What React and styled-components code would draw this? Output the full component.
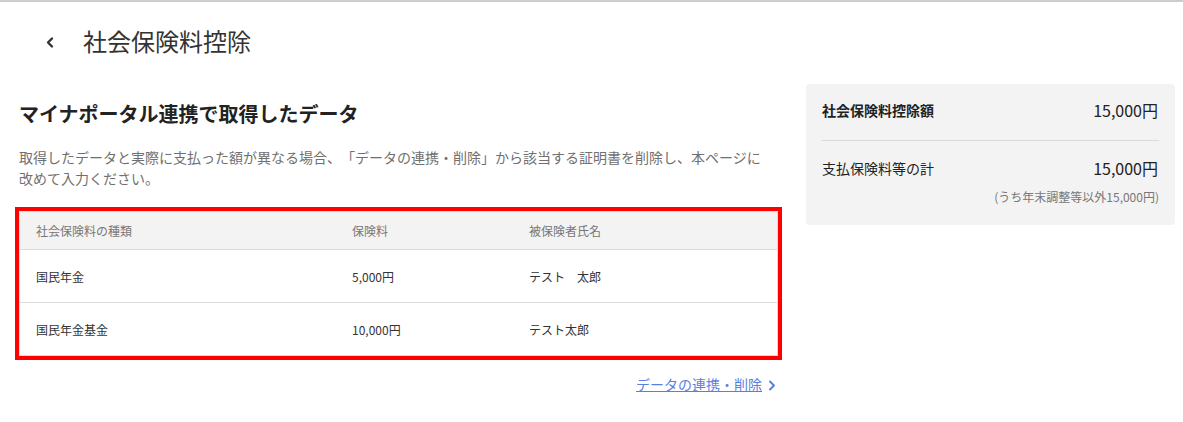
import React from 'react'
import styled, { createGlobalStyle } from 'styled-components'

const GlobalStyle = createGlobalStyle`
  body {
    margin: 0;
    background: #fff;
    color: #333;
    font-family: "Noto Sans CJK JP", "Noto Sans", sans-serif;
    text-spacing-trim: space-all;
  }
`

const Page = styled.div`
  border-top: 2px solid #cdcdcd;
  width: 1183px;
  min-height: 420px;
  box-sizing: border-box;
`

const Header = styled.header`
  display: flex;
  align-items: center;
  height: 78px;
  padding-left: 44px;
  gap: 27px;
`

const BackButton = styled.button`
  display: flex;
  align-items: center;
  justify-content: center;
  width: 12px;
  height: 16px;
  padding: 0;
  border: none;
  background: none;
  color: #333;
  cursor: pointer;
  margin-top: 3px;
`

const Title = styled.h1`
  margin: 0;
  font-size: 24px;
  line-height: 32px;
  font-weight: 400;
  color: #333;
`

const Main = styled.main`
  display: grid;
  grid-template-columns: 759px 369px;
  column-gap: 28px;
  align-items: start;
  padding: 4px 0 0 19px;
`

const Section = styled.section`
  display: flex;
  flex-direction: column;
`

const Heading = styled.h2`
  margin: 16px 0 0;
  font-size: 20px;
  line-height: 28px;
  font-weight: 700;
  color: #222;
`

const Description = styled.p`
  margin: 19px 0 0;
  max-width: 748px;
  font-size: 14px;
  line-height: 21px;
  color: #707070;
`

const Table = styled.div`
  margin-top: 22px;
  border: 1px solid #dcdcdc;
  outline: 4px solid #ff0000;
`

const Row = styled.div`
  display: grid;
  grid-template-columns: 316px 177px 1fr;
  align-items: center;
  padding-left: 16px;
  height: ${p => (p.$head ? '37px' : '52px')};
  background: ${p => (p.$head ? '#f3f3f3' : '#fff')};
  font-size: 12px;
  color: ${p => (p.$head ? '#777' : '#333')};
  & + & {
    border-top: 1px solid #dcdcdc;
  }
`

const LinkRow = styled.div`
  display: flex;
  justify-content: flex-end;
  margin-top: 18px;
  padding-right: 2px;
`

const DataLink = styled.a`
  display: flex;
  align-items: center;
  gap: 6px;
  font-size: 14px;
  line-height: 21px;
  color: #5b7fe0;
  cursor: pointer;
  svg {
    margin-top: 1px;
  }
  span {
    text-decoration: underline;
  }
`

const SummaryCard = styled.aside`
  background: #f3f3f3;
  border-radius: 4px;
  padding: 0 16px 20px;
`

const SummaryRow = styled.div`
  display: flex;
  justify-content: space-between;
  align-items: center;
  padding-top: ${p => p.$top};
  padding-bottom: ${p => p.$bottom || '0'};
  border-bottom: ${p => (p.$divider ? '1px solid #dadada' : 'none')};
`

const SummaryLabel = styled.span`
  font-size: 14px;
  line-height: 20px;
  font-weight: ${p => (p.$bold ? 700 : 400)};
  color: #222;
`

const SummaryValue = styled.span`
  font-size: 16px;
  line-height: 20px;
  color: #222;
  padding-right: 1px;
`

const Note = styled.div`
  margin-top: 11px;
  text-align: right;
  font-size: 12px;
  line-height: 16px;
  color: #777;
`

const rows = [
  { type: '国民年金', amount: '5,000円', name: 'テスト　太郎' },
  { type: '国民年金基金', amount: '10,000円', name: 'テスト太郎' },
]

export default function App() {
  return (
    <Page>
      <GlobalStyle />
      <Header>
        <BackButton aria-label="戻る">
          <svg width="10" height="13" viewBox="0 0 10 13" fill="none">
            <polyline points="7,2.5 3,6.5 7,10.5" stroke="currentColor" strokeWidth="2.4" strokeLinecap="round" strokeLinejoin="round" />
          </svg>
        </BackButton>
        <Title>社会保険料控除</Title>
      </Header>
      <Main>
        <Section>
          <Heading>マイナポータル連携で取得したデータ</Heading>
          <Description>
            取得したデータと実際に支払った額が異なる場合、「データの連携・削除」から該当する証明書を削除し、本ページに改めて入力ください。
          </Description>
          <Table>
            <Row $head>
              <span>社会保険料の種類</span>
              <span>保険料</span>
              <span>被保険者氏名</span>
            </Row>
            {rows.map(r => (
              <Row key={r.type}>
                <span>{r.type}</span>
                <span>{r.amount}</span>
                <span>{r.name}</span>
              </Row>
            ))}
          </Table>
          <LinkRow>
            <DataLink>
              <span>データの連携・削除</span>
              <svg width="8" height="11" viewBox="0 0 8 11" fill="none">
                <polyline points="2,1.5 6,5.5 2,9.5" stroke="currentColor" strokeWidth="2" strokeLinecap="round" strokeLinejoin="round" />
              </svg>
            </DataLink>
          </LinkRow>
        </Section>
        <SummaryCard>
          <SummaryRow $top="16px" $bottom="20px" $divider>
            <SummaryLabel $bold>社会保険料控除額</SummaryLabel>
            <SummaryValue>15,000円</SummaryValue>
          </SummaryRow>
          <SummaryRow $top="17px">
            <SummaryLabel>支払保険料等の計</SummaryLabel>
            <SummaryValue>15,000円</SummaryValue>
          </SummaryRow>
          <Note>(うち年末調整等以外15,000円)</Note>
        </SummaryCard>
      </Main>
    </Page>
  )
}
